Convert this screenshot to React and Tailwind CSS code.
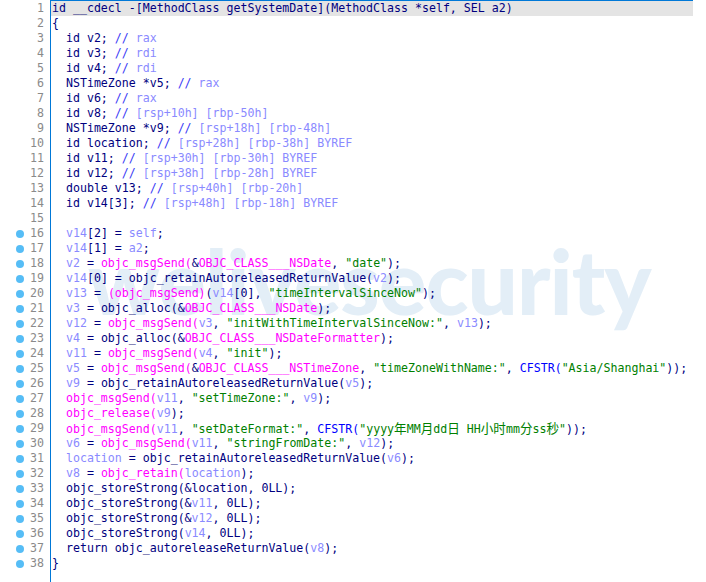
import React from 'react';

// token colour classes (IDA default pseudocode palette)
const C = {
  n: 'text-[#000080]',
  p: 'text-[#8a8aff]',
  m: 'text-[#ff00ff]',
  g: 'text-[#008000]',
  z: 'text-[#008000] text-[12.6px]',
  b: 'text-[#0000ff]',
  c: 'text-[#3a3af5]',
  k: 'text-[#8a8aff]',
};

const decl = (t, c) => [[`  ${t}; `, 'n'], ['//', 'c'], [` ${c}`, 'k']];

const LINES = [
  [['id __cdecl -[MethodClass getSystemDate](MethodClass *self, SEL a2)', 'n']],
  [['{', 'n']],
  decl('id v2', 'rax'),
  decl('id v3', 'rdi'),
  decl('id v4', 'rdi'),
  decl('NSTimeZone *v5', 'rax'),
  decl('id v6', 'rax'),
  decl('id v8', '[rsp+10h] [rbp-50h]'),
  decl('NSTimeZone *v9', '[rsp+18h] [rbp-48h]'),
  decl('id location', '[rsp+28h] [rbp-38h] BYREF'),
  decl('id v11', '[rsp+30h] [rbp-30h] BYREF'),
  decl('id v12', '[rsp+38h] [rbp-28h] BYREF'),
  decl('double v13', '[rsp+40h] [rbp-20h]'),
  decl('id v14[3]', '[rsp+48h] [rbp-18h] BYREF'),
  [],
  [['  ', 'n'], ['v14', 'p'], ['[2] = ', 'n'], ['self', 'p'], [';', 'n']],
  [['  ', 'n'], ['v14', 'p'], ['[1] = ', 'n'], ['a2', 'p'], [';', 'n']],
  [['  ', 'n'], ['v2', 'p'], [' = ', 'n'], ['objc_msgSend(', 'm'], ['&', 'n'], ['OBJC_CLASS___NSDate', 'm'], [', ', 'n'], ['"date"', 'g'], [');', 'n']],
  [['  ', 'n'], ['v14', 'p'], ['[0] = objc_retainAutoreleasedReturnValue(', 'n'], ['v2', 'p'], [');', 'n']],
  [['  ', 'n'], ['v13', 'p'], [' = ', 'n'], ['(objc_msgSend)', 'm'], ['(', 'n'], ['v14', 'p'], ['[0], ', 'n'], ['"timeIntervalSinceNow"', 'g'], [');', 'n']],
  [['  ', 'n'], ['v3', 'p'], [' = objc_alloc(&', 'n'], ['OBJC_CLASS___NSDate', 'm'], [');', 'n']],
  [['  ', 'n'], ['v12', 'p'], [' = ', 'n'], ['objc_msgSend(', 'm'], ['v3', 'p'], [', ', 'n'], ['"initWithTimeIntervalSinceNow:"', 'g'], [', ', 'n'], ['v13', 'p'], [');', 'n']],
  [['  ', 'n'], ['v4', 'p'], [' = objc_alloc(&', 'n'], ['OBJC_CLASS___NSDateFormatter', 'm'], [');', 'n']],
  [['  ', 'n'], ['v11', 'p'], [' = ', 'n'], ['objc_msgSend(', 'm'], ['v4', 'p'], [', ', 'n'], ['"init"', 'g'], [');', 'n']],
  [['  ', 'n'], ['v5', 'p'], [' = ', 'n'], ['objc_msgSend(', 'm'], ['&', 'n'], ['OBJC_CLASS___NSTimeZone', 'm'], [', ', 'n'], ['"timeZoneWithName:"', 'g'], [', ', 'n'], ['CFSTR(', 'b'], ['"Asia/Shanghai"', 'g'], ['));', 'n']],
  [['  ', 'n'], ['v9', 'p'], [' = objc_retainAutoreleasedReturnValue(', 'n'], ['v5', 'p'], [');', 'n']],
  [['  ', 'n'], ['objc_msgSend(', 'm'], ['v11', 'p'], [', ', 'n'], ['"setTimeZone:"', 'g'], [', ', 'n'], ['v9', 'p'], [');', 'n']],
  [['  ', 'n'], ['objc_release(', 'm'], ['v9', 'p'], [');', 'n']],
  [
    ['  ', 'n'], ['objc_msgSend(', 'm'], ['v11', 'p'], [', ', 'n'], ['"setDateFormat:"', 'g'], [', ', 'n'], ['CFSTR(', 'b'],
    ['"yyyy', 'g'], ['年', 'z'], ['MM', 'g'], ['月', 'z'], ['dd', 'g'], ['日', 'z'], [' HH', 'g'], ['小时', 'z'],
    ['mm', 'g'], ['分', 'z'], ['ss', 'g'], ['秒', 'z'], ['"', 'g'], ['));', 'n'],
  ],
  [['  ', 'n'], ['v6', 'p'], [' = ', 'n'], ['objc_msgSend(', 'm'], ['v11', 'p'], [', ', 'n'], ['"stringFromDate:"', 'g'], [', ', 'n'], ['v12', 'p'], [');', 'n']],
  [['  ', 'n'], ['location', 'p'], [' = objc_retainAutoreleasedReturnValue(', 'n'], ['v6', 'p'], [');', 'n']],
  [['  ', 'n'], ['v8', 'p'], [' = ', 'n'], ['objc_retain(', 'm'], ['location', 'p'], [');', 'n']],
  [['  objc_storeStrong(&location, 0LL);', 'n']],
  [['  objc_storeStrong(&', 'n'], ['v11', 'p'], [', 0LL);', 'n']],
  [['  objc_storeStrong(&', 'n'], ['v12', 'p'], [', 0LL);', 'n']],
  [['  objc_storeStrong(', 'n'], ['v14', 'p'], [', 0LL);', 'n']],
  [['  return objc_autoreleaseReturnValue(', 'n'], ['v8', 'p'], [');', 'n']],
  [['}', 'n']],
];

const mono = "font-['DejaVu_Sans_Mono','Noto_Sans_CJK_SC',monospace] text-[11.6px]";

export default function App() {
  return (
    <div className="relative w-[706px] h-[582px] overflow-hidden bg-white">
      {/* faint watermark behind the listing */}
      <div className="absolute left-[88px] top-[236px] font-['Lato',sans-serif] font-black text-[89px] leading-none tracking-[-1px] text-[#e3eef7] select-none">
        welivesecurity
      </div>

      <div className="relative flex h-full">
        {/* gutter */}
        <div className={`w-[50px] pt-[1px] ${mono}`}>
          {LINES.map((_, i) => (
            <div key={i} className="flex items-center h-[15px] leading-[15px]">
              <div className="w-[16px]" />
              <div className="w-[8px] flex justify-center">
                {i >= 15 && <span className="w-[8px] h-[8px] rounded-full bg-[#56bdf6]" />}
              </div>
              <div className="w-[20px] text-right text-[#8a8a8a]">{i + 1}</div>
            </div>
          ))}
        </div>

        {/* code pane */}
        <div className={`w-[643px] border-l border-t border-[#0078d7] ${mono}`}>
          {LINES.map((toks, i) => (
            <div
              key={i}
              className={`h-[15px] leading-[15px] pl-[1px] whitespace-pre ${i === 0 ? 'bg-[#e4e4e4]' : ''}`}
            >
              {toks.map(([t, k], j) => (
                <span key={j} className={C[k]}>{t}</span>
              ))}
            </div>
          ))}
        </div>
      </div>
    </div>
  );
}
